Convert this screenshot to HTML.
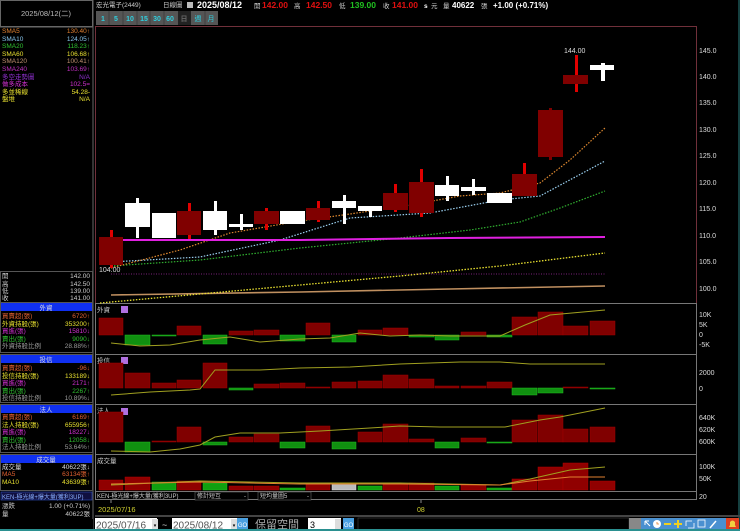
<!DOCTYPE html>
<html><head><meta charset="utf-8"><style>
html,body{margin:0;padding:0;background:#000;width:740px;height:531px;overflow:hidden}
svg text{font-family:"Liberation Sans","Noto Sans CJK TC",sans-serif}
</style></head><body>
<svg width="740" height="531" viewBox="0 0 740 531" xmlns="http://www.w3.org/2000/svg">
<rect width="740" height="531" fill="#000"/>
<!-- left panel borders -->
<rect x="0.5" y="0.5" width="92" height="26" fill="none" stroke="#666"/>
<text x="46" y="16" fill="#bbb" font-size="7.5" text-anchor="middle">2025/08/12(二)</text>
<line x1="93" y1="0" x2="93" y2="531" stroke="#666"/>
<g font-size="6.5">
<text x="2" y="33" fill="#e08030">SMA5</text><text x="90" y="33" fill="#e08030" text-anchor="end">130.40↑</text>
<text x="2" y="41" fill="#8ac8f0">SMA10</text><text x="90" y="41" fill="#8ac8f0" text-anchor="end">124.05↑</text>
<text x="2" y="48" fill="#30c030">SMA20</text><text x="90" y="48" fill="#30c030" text-anchor="end">118.23↑</text>
<text x="2" y="56" fill="#e8e030">SMA60</text><text x="90" y="56" fill="#e8e030" text-anchor="end">106.68↑</text>
<text x="2" y="63" fill="#c09070">SMA120</text><text x="90" y="63" fill="#c09070" text-anchor="end">100.41↑</text>
<text x="2" y="71" fill="#c030c0">SMA240</text><text x="90" y="71" fill="#c030c0" text-anchor="end">103.69↑</text>
<text x="2" y="79" fill="#9030d0">多空走勢圖</text><text x="90" y="79" fill="#9030d0" text-anchor="end">N/A</text>
<text x="2" y="86" fill="#d030d0">做多成本</text><text x="90" y="86" fill="#d030d0" text-anchor="end">102.5=</text>
<text x="2" y="94" fill="#e8e030">多並稀線</text><text x="90" y="94" fill="#e8e030" text-anchor="end">54.28-</text>
<text x="2" y="101" fill="#e8e030">盤堆</text><text x="90" y="101" fill="#e8e030" text-anchor="end">N/A</text>
</g>
<line x1="0" y1="27" x2="93" y2="27" stroke="#666"/>
<rect x="0.5" y="271.5" width="92" height="31" fill="none" stroke="#555"/>
<g font-size="6.5" fill="#ccc">
<text x="2" y="278">開</text><text x="90" y="278" text-anchor="end">142.00</text>
<text x="2" y="286">高</text><text x="90" y="286" text-anchor="end">142.50</text>
<text x="2" y="293">低</text><text x="90" y="293" text-anchor="end">139.00</text>
<text x="2" y="300">收</text><text x="90" y="300" text-anchor="end">141.00</text>
</g>
<!-- section headers -->
<g font-size="6.5">
<rect x="1" y="303" width="91" height="8" fill="#1030f0"/><text x="46" y="310" fill="#ddd" text-anchor="middle">外資</text>
<text x="2" y="318" fill="#e06030">買賣超(張)</text><text x="90" y="318" fill="#e06030" text-anchor="end">6720↑</text>
<text x="2" y="326" fill="#e8e030">外資持股(張)</text><text x="90" y="326" fill="#e8e030" text-anchor="end">353200↑</text>
<text x="2" y="333" fill="#d030d0">買進(張)</text><text x="90" y="333" fill="#d030d0" text-anchor="end">15810↓</text>
<text x="2" y="341" fill="#30c030">賣出(張)</text><text x="90" y="341" fill="#30c030" text-anchor="end">9090↓</text>
<text x="2" y="348" fill="#999">外資持股比例</text><text x="90" y="348" fill="#999" text-anchor="end">28.88%↑</text>
<rect x="0.5" y="302.5" width="92" height="50" fill="none" stroke="#555"/>
<rect x="1" y="355" width="91" height="8" fill="#1030f0"/><text x="46" y="362" fill="#ddd" text-anchor="middle">投信</text>
<text x="2" y="370" fill="#e06030">買賣超(張)</text><text x="90" y="370" fill="#e06030" text-anchor="end">-96↓</text>
<text x="2" y="378" fill="#e8e030">投信持股(張)</text><text x="90" y="378" fill="#e8e030" text-anchor="end">133189↓</text>
<text x="2" y="385" fill="#d030d0">買進(張)</text><text x="90" y="385" fill="#d030d0" text-anchor="end">2171↑</text>
<text x="2" y="393" fill="#30c030">賣出(張)</text><text x="90" y="393" fill="#30c030" text-anchor="end">2267↑</text>
<text x="2" y="400" fill="#999">投信持股比例</text><text x="90" y="400" fill="#999" text-anchor="end">10.89%↓</text>
<rect x="0.5" y="354.5" width="92" height="48" fill="none" stroke="#555"/>
<rect x="1" y="405" width="91" height="8" fill="#1030f0"/><text x="46" y="412" fill="#ddd" text-anchor="middle">法人</text>
<text x="2" y="419" fill="#e06030">買賣超(張)</text><text x="90" y="419" fill="#e06030" text-anchor="end">6169↑</text>
<text x="2" y="427" fill="#e8e030">法人持股(張)</text><text x="90" y="427" fill="#e8e030" text-anchor="end">655956↑</text>
<text x="2" y="434" fill="#d030d0">買進(張)</text><text x="90" y="434" fill="#d030d0" text-anchor="end">18227↓</text>
<text x="2" y="442" fill="#30c030">賣出(張)</text><text x="90" y="442" fill="#30c030" text-anchor="end">12058↓</text>
<text x="2" y="449" fill="#999">法人持股比例</text><text x="90" y="449" fill="#999" text-anchor="end">53.64%↑</text>
<rect x="0.5" y="404.5" width="92" height="48" fill="none" stroke="#555"/>
<rect x="1" y="455" width="91" height="8" fill="#1030f0"/><text x="46" y="462" fill="#ddd" text-anchor="middle">成交量</text>
<text x="2" y="469" fill="#ddd">成交量</text><text x="90" y="469" fill="#ddd" text-anchor="end">40622張↓</text>
<text x="2" y="476" fill="#e06030">MA5</text><text x="90" y="476" fill="#e06030" text-anchor="end">63134張↑</text>
<text x="2" y="484" fill="#e8e030">MA10</text><text x="90" y="484" fill="#e8e030" text-anchor="end">43639張↑</text>
<rect x="0.5" y="454.5" width="92" height="36" fill="none" stroke="#555"/>
<rect x="1" y="492" width="91" height="8" fill="#101040" stroke="#3050c0" stroke-width="0.6"/><text x="2" y="499" fill="#8ab0ff" font-size="6">KEN-極光線+爆大量(獲利3UP)</text>
<text x="2" y="508" fill="#ccc">漲跌</text><text x="90" y="508" fill="#ccc" text-anchor="end">1.00 (+0.71%)</text>
<text x="2" y="516" fill="#ccc">量</text><text x="90" y="516" fill="#ccc" text-anchor="end">40622張</text>
</g>
<!-- left edge colored marks -->
<rect x="0" y="519" width="93" height="10" fill="#000"/>

<!-- header -->
<g font-size="6.5" fill="#ccc">
<text x="96" y="7">宏光電子(2449)</text>
<text x="163" y="7">日線圖</text>
<rect x="187" y="2" width="6" height="6" fill="#bbb"/>
<text x="197" y="8" font-size="9" font-weight="bold" fill="#fff">2025/08/12</text>
<text x="254" y="8">開</text><text x="262" y="8" font-size="8.5" font-weight="bold" fill="#e01010">142.00</text>
<text x="294" y="8">高</text><text x="306" y="8" font-size="8.5" font-weight="bold" fill="#e01010">142.50</text>
<text x="339" y="8">低</text><text x="350" y="8" font-size="8.5" font-weight="bold" fill="#20c020">139.00</text>
<text x="383" y="8">收</text><text x="392" y="8" font-size="8.5" font-weight="bold" fill="#e01010">141.00</text>
<text x="424" y="8" font-weight="bold" fill="#fff">s</text><text x="431" y="8">元</text>
<text x="443" y="8">量</text><text x="452" y="8" font-size="8" font-weight="bold" fill="#fff">40622</text>
<text x="481" y="8">張</text><text x="493" y="8" font-size="8" font-weight="bold" fill="#fff">+1.00 (+0.71%)</text>
</g>
<g font-size="7" fill="#30d0e0" font-weight="bold" text-anchor="middle">
<rect x="96" y="11" width="122" height="14" fill="#555"/>
<rect x="178" y="11" width="13" height="14" fill="#222"/>
<text x="103" y="21">1</text><text x="116" y="21">5</text><text x="130" y="21">10</text><text x="144" y="21">15</text><text x="157" y="21">30</text><text x="170" y="21">60</text>
<text x="184" y="21" fill="#666">日</text><text x="198" y="21" font-weight="normal">週</text><text x="211" y="21" font-weight="normal">月</text>
<g stroke="#333" stroke-width="0.6"><line x1="109" y1="11" x2="109" y2="25"/><line x1="123" y1="11" x2="123" y2="25"/><line x1="137" y1="11" x2="137" y2="25"/><line x1="150" y1="11" x2="150" y2="25"/><line x1="164" y1="11" x2="164" y2="25"/><line x1="205" y1="11" x2="205" y2="25"/></g>
</g>

<!-- chart frames -->
<g fill="none" stroke-width="1">
<rect x="95.5" y="26.5" width="601" height="277" stroke="#70303a"/>
<rect x="95.5" y="303.5" width="601" height="51" stroke="#777"/>
<rect x="95.5" y="354.5" width="601" height="50" stroke="#777"/>
<rect x="95.5" y="404.5" width="601" height="50" stroke="#777"/>
<rect x="95.5" y="454.5" width="601" height="37" stroke="#777"/>
<rect x="95.5" y="491.5" width="601" height="8" stroke="#777"/>
</g>
<line x1="739" y1="0" x2="739" y2="531" stroke="#2a8080"/>
<!-- axis labels -->
<g font-size="7" fill="#ddd">
<text x="699" y="53">145.0</text><text x="699" y="79">140.0</text><text x="699" y="105">135.0</text><text x="699" y="132">130.0</text><text x="699" y="158">125.0</text><text x="699" y="185">120.0</text><text x="699" y="211">115.0</text><text x="699" y="238">110.0</text><text x="699" y="264">105.0</text><text x="699" y="291">100.0</text>
<text x="699" y="317">10K</text><text x="699" y="327">5K</text><text x="699" y="337">0</text><text x="699" y="347">-5K</text>
<text x="699" y="375">2000</text><text x="699" y="391">0</text>
<text x="699" y="420">640K</text><text x="699" y="432">620K</text><text x="699" y="444">600K</text>
<text x="699" y="469">100K</text><text x="699" y="481">50K</text><text x="699" y="499">20</text>
</g>

<!-- MA lines -->
<polyline points="111,274 605,274" stroke="#7a207a" stroke-width="1" stroke-dasharray="1,1.5" fill="none"/>
<polyline points="111,295 300,292 450,289 605,286" stroke="#c09060" stroke-width="1.6" fill="none"/>
<polyline points="100,303 200,294 300,285 400,276 500,266 605,253" stroke="#e8e030" stroke-width="1.3" stroke-dasharray="1.5,1.5" fill="none"/>
<polyline points="111,266 200,260 300,248 400,238 470,230 520,222 560,208 605,191" stroke="#30b030" stroke-width="1.2" stroke-dasharray="1.5,1.5" fill="none"/>
<polyline points="111,262 200,257 280,240 350,218 430,213 500,200 540,196 605,161" stroke="#9ad0f0" stroke-width="1.2" stroke-dasharray="1.5,1.5" fill="none"/>
<polyline points="111,268 180,250 230,233 300,221 350,214 410,205 460,196 500,193 540,183 570,160 605,128" stroke="#e08a30" stroke-width="1.2" stroke-dasharray="1.5,1.5" fill="none"/>
<polyline points="111,240 300,240 450,238 605,237" stroke="#e020e0" stroke-width="2" fill="none"/>

<!-- candles -->
<g fill="#800000">
<rect x="110" y="230" width="3" height="38" fill="#e00000"/><rect x="99" y="237" width="24" height="28"/>
<rect x="136" y="198" width="3" height="40" fill="#fff"/><rect x="125" y="203" width="25" height="24" fill="#fff"/>
<rect x="152" y="213" width="24" height="25" fill="#fff"/>
<rect x="188" y="203" width="3" height="36" fill="#e00000"/><rect x="177" y="211" width="24" height="24"/>
<rect x="214" y="201" width="3" height="34" fill="#fff"/><rect x="203" y="211" width="24" height="19" fill="#fff"/>
<rect x="240" y="214" width="3" height="16" fill="#fff"/><rect x="229" y="224" width="24" height="3" fill="#fff"/>
<rect x="265" y="208" width="3" height="22" fill="#e00000"/><rect x="254" y="211" width="25" height="13"/>
<rect x="280" y="211" width="25" height="13" fill="#fff"/>
<rect x="317" y="201" width="3" height="21" fill="#e00000"/><rect x="306" y="208" width="24" height="12"/>
<rect x="343" y="195" width="3" height="29" fill="#fff"/><rect x="332" y="201" width="24" height="7" fill="#fff"/>
<rect x="369" y="206" width="3" height="11" fill="#fff"/><rect x="358" y="206" width="24" height="5" fill="#fff"/>
<rect x="394" y="184" width="3" height="28" fill="#e00000"/><rect x="383" y="193" width="25" height="17"/>
<rect x="420" y="169" width="3" height="48" fill="#e00000"/><rect x="409" y="182" width="25" height="31"/>
<rect x="446" y="176" width="3" height="25" fill="#fff"/><rect x="435" y="185" width="24" height="11" fill="#fff"/>
<rect x="472" y="179" width="3" height="16" fill="#fff"/><rect x="461" y="187" width="25" height="4" fill="#fff"/>
<rect x="487" y="193" width="25" height="10" fill="#fff"/>
<rect x="523" y="163" width="3" height="33" fill="#e00000"/><rect x="512" y="174" width="25" height="22"/>
<rect x="549" y="108" width="3" height="52" fill="#800000"/><rect x="538" y="110" width="25" height="47"/>
<rect x="575" y="55" width="3" height="37" fill="#e00000"/><rect x="563" y="75" width="25" height="9"/>
<rect x="601" y="63" width="4" height="18" fill="#fff"/><rect x="590" y="65" width="24" height="5" fill="#fff"/>
</g>
<text x="564" y="53" font-size="7" fill="#ddd">144.00</text>
<text x="99" y="272" font-size="7" fill="#ddd">104.00</text>

<!-- panel labels -->
<g font-size="6.5" fill="#ccc">
<text x="97" y="312">外資</text><rect x="121" y="306" width="7" height="7" fill="#b070e0"/>
<text x="97" y="363">投信</text><rect x="121" y="357" width="7" height="7" fill="#b070e0"/>
<text x="97" y="413">法人</text><rect x="121" y="408" width="7" height="7" fill="#b070e0"/>
<text x="97" y="463">成交量</text>
</g>

<!-- 外資 bars -->
<g fill="#800000" stroke="#a00000" stroke-width="0.5">
<rect x="99" y="318" width="24" height="17"/>
<rect x="125" y="335" width="25" height="10" fill="#109010" stroke="#20c020"/>
<rect x="152" y="335" width="24" height="1" fill="#109010" stroke="#20c020"/>
<rect x="177" y="326" width="24" height="9"/>
<rect x="203" y="335" width="24" height="9" fill="#109010" stroke="#20c020"/>
<rect x="229" y="331" width="24" height="4"/>
<rect x="254" y="330" width="25" height="5"/>
<rect x="280" y="335" width="25" height="6" fill="#109010" stroke="#20c020"/>
<rect x="306" y="323" width="24" height="12"/>
<rect x="332" y="335" width="24" height="7" fill="#109010" stroke="#20c020"/>
<rect x="358" y="330" width="24" height="5"/>
<rect x="383" y="328" width="25" height="7"/>
<rect x="409" y="335" width="25" height="2" fill="#109010" stroke="#20c020"/>
<rect x="435" y="335" width="24" height="5" fill="#109010" stroke="#20c020"/>
<rect x="461" y="332" width="25" height="3"/>
<rect x="487" y="335" width="25" height="2" fill="#109010" stroke="#20c020"/>
<rect x="512" y="317" width="25" height="18"/>
<rect x="538" y="312" width="25" height="23"/>
<rect x="563" y="326" width="25" height="9"/>
<rect x="590" y="321" width="25" height="14"/>
</g>
<polyline points="111,343 140,346 170,345 200,340 230,337 260,342 300,339 330,338 360,333 390,336 420,335 450,336 480,336 500,336 525,325 550,315 605,310" stroke="#a0a020" stroke-width="1" fill="none"/>

<!-- 投信 bars -->
<g fill="#800000" stroke="#a00000" stroke-width="0.5">
<rect x="99" y="363" width="24" height="25"/>
<rect x="125" y="373" width="25" height="15"/>
<rect x="152" y="383" width="24" height="5"/>
<rect x="177" y="380" width="24" height="8"/>
<rect x="203" y="363" width="24" height="25"/>
<rect x="229" y="388" width="24" height="2" fill="#109010" stroke="#20c020"/>
<rect x="254" y="384" width="25" height="4"/>
<rect x="280" y="383" width="25" height="5"/>
<rect x="306" y="387" width="24" height="1"/>
<rect x="332" y="382" width="24" height="6"/>
<rect x="358" y="381" width="24" height="7"/>
<rect x="383" y="375" width="25" height="13"/>
<rect x="409" y="379" width="25" height="9"/>
<rect x="435" y="386" width="24" height="2"/>
<rect x="461" y="386" width="25" height="2"/>
<rect x="487" y="382" width="25" height="6"/>
<rect x="512" y="388" width="25" height="7" fill="#109010" stroke="#20c020"/>
<rect x="538" y="388" width="25" height="5" fill="#109010" stroke="#20c020"/>
<rect x="563" y="387" width="25" height="1"/>
<rect x="590" y="388" width="25" height="1" fill="#109010" stroke="#20c020"/>
</g>
<polyline points="111,395 150,392 190,390 200,389 215,370 260,370 300,368 350,367 400,364 460,362 500,362 530,364 605,364" stroke="#a0a020" stroke-width="1" fill="none"/>

<!-- 法人 bars -->
<g fill="#800000" stroke="#a00000" stroke-width="0.5">
<rect x="99" y="412" width="24" height="30"/>
<rect x="125" y="442" width="25" height="10" fill="#109010" stroke="#20c020"/>
<rect x="152" y="441" width="24" height="1"/>
<rect x="177" y="427" width="24" height="15"/>
<rect x="203" y="442" width="24" height="3" fill="#109010" stroke="#20c020"/>
<rect x="229" y="437" width="24" height="5"/>
<rect x="254" y="434" width="25" height="8"/>
<rect x="280" y="442" width="25" height="6" fill="#109010" stroke="#20c020"/>
<rect x="306" y="426" width="24" height="16"/>
<rect x="332" y="442" width="24" height="7" fill="#109010" stroke="#20c020"/>
<rect x="358" y="432" width="24" height="10"/>
<rect x="383" y="424" width="25" height="18"/>
<rect x="409" y="439" width="25" height="3"/>
<rect x="435" y="442" width="24" height="6" fill="#109010" stroke="#20c020"/>
<rect x="461" y="438" width="25" height="4"/>
<rect x="487" y="442" width="25" height="1" fill="#109010" stroke="#20c020"/>
<rect x="512" y="420" width="25" height="22"/>
<rect x="538" y="415" width="25" height="27"/>
<rect x="563" y="429" width="25" height="13"/>
<rect x="590" y="427" width="25" height="15"/>
</g>
<polyline points="111,451 150,452 180,449 200,445 215,437 240,433 280,433 320,431 370,428 400,426 440,427 480,427 505,427 540,420 560,417 605,408" stroke="#a0a020" stroke-width="1" fill="none"/>

<!-- 成交量 bars -->
<g fill="#900000" stroke="#b00000" stroke-width="0.5">
<rect x="99" y="480" width="24" height="10"/>
<rect x="125" y="477" width="25" height="13"/>
<rect x="152" y="482" width="24" height="8" fill="#10a010" stroke="#20c020"/>
<rect x="177" y="481" width="24" height="9"/>
<rect x="203" y="483" width="24" height="7" fill="#10a010" stroke="#20c020"/>
<rect x="229" y="486" width="24" height="4"/>
<rect x="254" y="486" width="25" height="4"/>
<rect x="280" y="488" width="25" height="2" fill="#10a010" stroke="#20c020"/>
<rect x="306" y="484" width="24" height="6"/>
<rect x="332" y="483" width="24" height="7" fill="#bbb" stroke="#ddd"/>
<rect x="358" y="486" width="24" height="4" fill="#10a010" stroke="#20c020"/>
<rect x="383" y="484" width="25" height="6"/>
<rect x="409" y="483" width="25" height="7"/>
<rect x="435" y="486" width="24" height="4" fill="#10a010" stroke="#20c020"/>
<rect x="461" y="485" width="25" height="5"/>
<rect x="487" y="488" width="25" height="2" fill="#10a010" stroke="#20c020"/>
<rect x="512" y="479" width="25" height="11"/>
<rect x="538" y="467" width="25" height="23"/>
<rect x="563" y="463" width="25" height="27"/>
<rect x="590" y="481" width="25" height="9"/>
</g>
<polyline points="111,485 200,481 300,483 400,483 500,485 530,479 570,470 605,467" stroke="#a0a020" stroke-width="1" fill="none"/>
<polyline points="111,484 200,482 300,484 400,484 500,485 530,481 570,477 605,477" stroke="#e08030" stroke-width="1" fill="none"/>

<!-- bottom strip -->
<g font-size="6">
<text x="97" y="498" fill="#ccc">KEN-極光線+爆大量(獲利3UP)</text>
<rect x="195" y="492" width="53" height="8" fill="#000" stroke="#666" stroke-width="0.6"/><text x="197" y="498" fill="#ccc">修計短互</text><text x="244" y="498" fill="#ccc">-</text>
<rect x="258" y="492" width="53" height="8" fill="#000" stroke="#666" stroke-width="0.6"/><text x="260" y="498" fill="#ccc">短均量圖5</text><text x="307" y="498" fill="#ccc">-</text>
</g>
<line x1="111" y1="500" x2="111" y2="503" stroke="#888"/>
<text x="98" y="512" font-size="7.5" fill="#d0d030">2025/07/16</text>
<line x1="421" y1="500" x2="421" y2="503" stroke="#888"/>
<text x="417" y="512" font-size="7" fill="#d0d030">08</text>
<line x1="95" y1="516" x2="740" y2="516" stroke="#444" stroke-width="2"/>

<!-- bottom controls -->
<rect x="95" y="518" width="62" height="12" fill="#fff"/><text x="96" y="528.5" font-size="10" fill="#555">2025/07/16</text>
<rect x="152" y="519" width="6" height="10" fill="#ddd"/><text x="155" y="527" font-size="5" fill="#000" text-anchor="middle">▾</text>
<text x="162" y="528" font-size="9" fill="#ccc">~</text>
<rect x="172" y="518" width="65" height="12" fill="#fff"/><text x="173" y="528.5" font-size="10" fill="#555">2025/08/12</text>
<rect x="231" y="519" width="6" height="10" fill="#ddd"/><text x="234" y="527" font-size="5" fill="#000" text-anchor="middle">▾</text>
<rect x="237" y="518" width="11" height="12" fill="#4aa0e0"/><text x="242.5" y="527" font-size="6" fill="#fff" text-anchor="middle">GO</text>
<text x="255" y="528" font-size="11" fill="#aaa">保留空間</text>
<rect x="308" y="518" width="33" height="12" fill="#fff"/><text x="310" y="528" font-size="9" fill="#000">3</text>
<rect x="335" y="519" width="6" height="10" fill="#ddd"/>
<rect x="343" y="518" width="11" height="12" fill="#4aa0e0"/><text x="348.5" y="527" font-size="6" fill="#fff" text-anchor="middle">GO</text>
<rect x="358" y="518" width="271" height="12" fill="#000" stroke="#444" stroke-width="0.6"/>
<rect x="629" y="518" width="12" height="12" fill="#888"/>
<rect x="641" y="518" width="98" height="12" fill="#4a90d0"/>
<g fill="#fff" stroke="#fff">
<path d="M645 521 L650 526 M645 521 L645 525 M645 521 L649 521" stroke-width="1" fill="none"/>
<circle cx="657" cy="524" r="4" stroke="none"/><path d="M657 522 L657 524 L659 524" stroke="#e08030" stroke-width="0.8" fill="none"/>
<rect x="664" y="523" width="7" height="2" fill="#f0d020" stroke="none"/>
<path d="M678 520 L678 528 M674 524 L682 524" stroke="#f0d020" stroke-width="2"/>
<path d="M686 526 L686 521 L692 521 M688 528 L694 528 L694 523" stroke-width="0.8" fill="none"/>
<rect x="698" y="520" width="7" height="7" fill="none" stroke-width="0.8"/>
<path d="M710 528 L716 521" stroke-width="1.5"/>
<rect x="726" y="518" width="13" height="12" fill="#e04020" stroke="none"/>
<path d="M729 527 L736 527 L735 525 L735 522 Q732.5 519 730 522 L730 525 Z" fill="#f0d040" stroke="none"/>
</g>
<line x1="0" y1="530" x2="740" y2="530" stroke="#2a9090" stroke-width="2"/>
</svg>
</body></html>
